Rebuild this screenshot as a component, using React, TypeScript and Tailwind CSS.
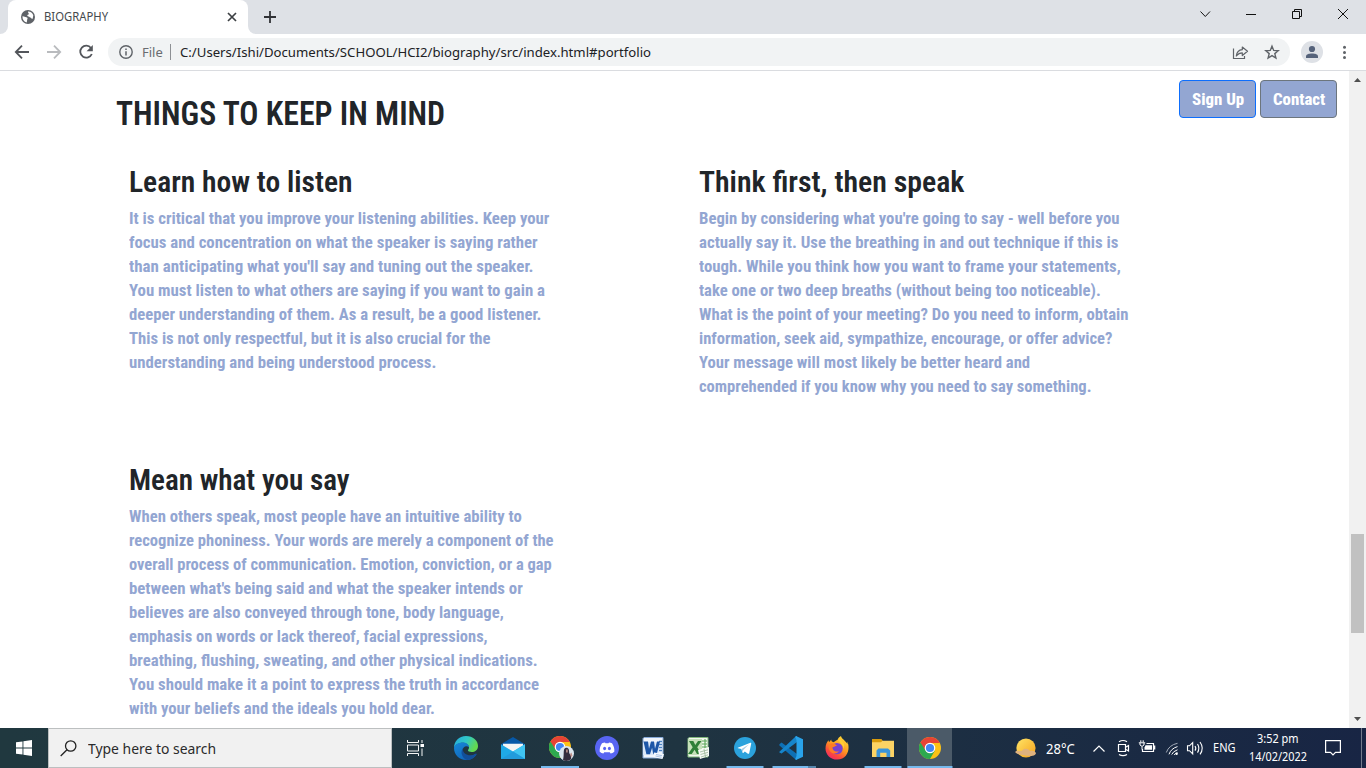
import { useLayoutEffect, useRef, useState, type ReactNode } from "react";

/** A single line of text stretched or condensed to a given width. */
function Fit({ text, width, className = "" }: { text: string; width: number; className?: string }) {
  const ref = useRef<HTMLSpanElement>(null);
  const [scale, setScale] = useState(1);
  useLayoutEffect(() => {
    if (ref.current) setScale(width / ref.current.offsetWidth);
  }, [text, width]);
  return (
    <div className={`whitespace-nowrap ${className}`} style={{ width }}>
      <span ref={ref} className="inline-block origin-left" style={{ transform: `scaleX(${scale})` }}>
        {text}
      </span>
    </div>
  );
}

type Line = [string, number];

const listen: Line[] = [
  ["It is critical that you improve your listening abilities. Keep your", 420],
  ["focus and concentration on what the speaker is saying rather", 409],
  ["than anticipating what you'll say and tuning out the speaker.", 404],
  ["You must listen to what others are saying if you want to gain a", 416],
  ["deeper understanding of them. As a result, be a good listener.", 412],
  ["This is not only respectful, but it is also crucial for the", 362],
  ["understanding and being understood process.", 307],
];

const think: Line[] = [
  ["Begin by considering what you're going to say - well before you", 421],
  ["actually say it. Use the breathing in and out technique if this is", 419],
  ["tough. While you think how you want to frame your statements,", 422],
  ["take one or two deep breaths (without being too noticeable).", 402],
  ["What is the point of your meeting? Do you need to inform, obtain", 430],
  ["information, seek aid, sympathize, encourage, or offer advice?", 413],
  ["Your message will most likely be better heard and", 331],
  ["comprehended if you know why you need to say something.", 392],
];

const mean: Line[] = [
  ["When others speak, most people have an intuitive ability to", 393],
  ["recognize phoniness. Your words are merely a component of the", 425],
  ["overall process of communication. Emotion, conviction, or a gap", 423],
  ["between what's being said and what the speaker intends or", 394],
  ["believes are also conveyed through tone, body language,", 375],
  ["emphasis on words or lack thereof, facial expressions,", 359],
  ["breathing, flushing, sweating, and other physical indications.", 409],
  ["You should make it a point to express the truth in accordance", 410],
  ["with your beliefs and the ideals you hold dear.", 306],
];

function Article({ title, width, lines }: { title: string; width: number; lines: Line[] }) {
  return (
    <article className="w-[570px] shrink-0">
      <h3 className="text-[29px] leading-[34px] font-semibold text-[#212529]">
        <Fit text={title} width={width} />
      </h3>
      <div className="mt-2 text-[16px] leading-6 font-bold text-[#93a6d2]">
        {lines.map(([t, w]) => (
          <Fit key={t} text={t} width={w} />
        ))}
      </div>
    </article>
  );
}

function TabStrip() {
  return (
    <div className="flex h-[34px] bg-[#dee1e6]">
      <div className="flex h-full w-2 items-end bg-white">
        <div className="h-full w-full rounded-br-lg bg-[#dee1e6]" />
      </div>
      <div className="flex h-full w-[240px] items-center rounded-t-lg bg-white pl-[13px]">
        <svg width="14" height="14" viewBox="0 0 14 14">
          <circle cx="7" cy="7" r="7" fill="#5f6368" />
          <path d="M1.5 6.2 C3 6 4 7 5.3 7.2 C6.6 7.4 6.9 8.4 6.2 9.4 L5.8 12.4 C3 11.8 1.2 9.5 1.5 6.2Z M7 1.5 C9.4 1.4 11.6 3 12.3 5.2 L11.7 8.7 C11 8.9 10.4 8.3 9.4 7.5 C8.4 7.1 8 6.5 6.5 6 C5.8 5.2 6.7 4.5 8 4.2 C8.1 3.5 6.9 3 7 1.5Z" fill="#fff" />
        </svg>
        <Fit text="BIOGRAPHY" width={64} className="ml-[9px] text-[12px] leading-4 text-[#45494d]" />
        <svg className="ml-[119px]" width="10" height="10" viewBox="0 0 10 10">
          <path d="M1 1 L9 9 M9 1 L1 9" stroke="#3c4043" strokeWidth="1.7" />
        </svg>
      </div>
      <div className="flex h-full w-2 bg-white">
        <div className="h-full w-full rounded-bl-lg bg-[#dee1e6]" />
      </div>
      <svg className="mt-[11px] ml-2" width="12" height="12" viewBox="0 0 12 12">
        <path d="M6 0 V12 M0 6 H12" stroke="#303236" strokeWidth="1.8" />
      </svg>
      <div className="flex-1" />
      <svg width="166" height="34" viewBox="1200 0 166 34" fill="none" stroke="#111" strokeWidth="1">
        <path d="M1200.5 11.5 L1205.3 16.5 L1210 11.5" />
        <path d="M1246 14.5 H1256" />
        <path d="M1292.5 11.5 H1299.5 V18.5 H1292.5Z M1294.5 11.5 V9.5 H1301.5 V16.5 H1299.5" />
        <path d="M1338 9 L1348 19 M1348 9 L1338 19" />
      </svg>
    </div>
  );
}

function Toolbar() {
  return (
    <div className="flex h-[37px] items-start border-b border-[#dadce0] bg-white">
      <svg width="108" height="36" viewBox="0 34 108 36" fill="none" strokeWidth="1.8">
        <path d="M29 52 H16.5 M22 45.7 L15.8 52 L22 58.3" stroke="#53565b" />
        <path d="M47 52 H59.5 M54 45.7 L60.2 52 L54 58.3" stroke="#b9bbbe" />
        <path d="M91 48 A6 6 0 1 0 91.8 54" stroke="#53565b" />
        <path d="M92.8 45 V51.2 H86.6Z" fill="#53565b" />
      </svg>
      <div className="mt-1 flex h-7 w-[1182px] items-center rounded-full bg-[#f1f3f4] pl-[11px]">
        <svg width="14" height="14" viewBox="0 0 14 14">
          <circle cx="7" cy="7" r="6.2" fill="none" stroke="#5f6368" strokeWidth="1.4" />
          <path d="M7 6.2 V10.4 M7 3.5 V5" stroke="#5f6368" strokeWidth="1.5" />
        </svg>
        <Fit text="File" width={21} className="ml-[9px] text-[13px] leading-5 text-[#696c70]" />
        <div className="ml-[7px] h-4 w-px bg-[#8d9094]" />
        <Fit
          text="C:/Users/Ishi/Documents/SCHOOL/HCI2/biography/src/index.html#portfolio"
          width={471}
          className="ml-[9px] text-[13px] leading-5 text-[#202124]"
        />
        <div className="flex-1" />
        <svg width="58" height="28" viewBox="1232 38 58 28" fill="none" stroke="#5f6368" strokeWidth="1.2">
          <path d="M1233.5 48.5 V58.5 H1244.5 V56" />
          <path d="M1236.3 56 C1236.8 51.8 1239 50 1242.3 49.7 V47 L1247.5 51.3 L1242.3 55.5 V52.8 C1239.5 52.8 1238 53.8 1236.3 56Z" strokeLinejoin="round" />
          <path d="M1272 46.2 L1273.7 50.4 L1278.2 50.7 L1274.8 53.6 L1275.9 58 L1272 55.6 L1268.1 58 L1269.2 53.6 L1265.8 50.7 L1270.3 50.4Z" strokeWidth="1.4" />
        </svg>
      </div>
      <svg width="76" height="36" viewBox="1290 34 76 36">
        <circle cx="1312" cy="52" r="11" fill="#dee1e6" />
        <circle cx="1312" cy="49" r="3.1" fill="#55627a" />
        <path d="M1306 58 V56.5 C1306 54.3 1309 53.5 1312 53.5 C1315 53.5 1318 54.3 1318 56.5 V58Z" fill="#55627a" />
        <g fill="#5f6368">
          <circle cx="1344.5" cy="47.2" r="1.5" />
          <circle cx="1344.5" cy="52.4" r="1.5" />
          <circle cx="1344.5" cy="57.6" r="1.5" />
        </g>
      </svg>
    </div>
  );
}

function ChromeLogo() {
  return (
    <g>
      <circle cx="11" cy="11" r="11" fill="#fbc116" />
      <path d="M11 11 L1.47 5.5 A11 11 0 0 0 11 22 L15.8 13.7Z" fill="#2da94f" />
      <path d="M1.47 5.5 A11 11 0 0 1 20.53 5.5 L20.6 6 H11 L6.6 13.6Z" fill="#e64335" />
      <circle cx="11" cy="11" r="5.3" fill="#fff" />
      <circle cx="11" cy="11" r="4.1" fill="#4285f4" />
    </g>
  );
}

function TaskCell({ className, line, children }: { className: string; line?: string; children: ReactNode }) {
  return (
    <div className={`relative flex h-10 shrink-0 items-center justify-center ${className}`}>
      {children}
      {line && <div className={`absolute bottom-0 left-1/2 h-0.5 -translate-x-1/2 bg-[#76b9ed] ${line}`} />}
    </div>
  );
}

function Taskbar() {
  return (
    <footer className="flex h-10 bg-linear-to-r from-[#20383f] via-[#1f3441] to-[#182544] text-white">
      <div className="flex w-12 items-center justify-center">
        <svg width="16" height="16" viewBox="0 0 16 16" fill="#fff">
          <path d="M0 2.3 L6.5 1.4 V7.5 H0Z M7.4 1.2 L16 0 V7.5 H7.4Z M0 8.4 H6.5 V14.6 L0 13.7Z M7.4 8.4 H16 V16 L7.4 14.8Z" />
        </svg>
      </div>
      <div className="flex w-[344px] items-center border border-[#bcbfc0] bg-[#f1f1f1] pl-[11px]">
        <svg width="17" height="17" viewBox="0 0 17 17" fill="none" stroke="#222" strokeWidth="1.3">
          <circle cx="10.7" cy="6" r="5.2" />
          <path d="M7 9.7 L0.7 16" />
        </svg>
        <Fit text="Type here to search" width={128} className="ml-[11px] text-[15px] leading-5 text-[#2b2b2b]" />
      </div>
      <div className="flex w-[51px] items-center pl-[15px]">
        <svg width="18" height="16" viewBox="0 0 18 16" fill="none" stroke="#f4f6f6" strokeWidth="1">
          <path d="M0.5 0 V2.5 H11.5 V0 M0.5 5 H11.5 V11 H0.5Z M0.5 16 V13.5 H11.5 V16 M15 0 V3 M15 8.5 V16" />
          <path d="M13.5 4 H17 V7 H13.5Z" fill="#fff" stroke="none" />
        </svg>
      </div>
      <TaskCell className="w-[46px]">
        <svg width="24" height="24" viewBox="0 0 24 24">
          <defs>
            <linearGradient id="edgeTop" x1="0" x2="1" y1="0" y2=".4">
              <stop offset="0" stopColor="#24a9e0" />
              <stop offset=".55" stopColor="#31c8c4" />
              <stop offset="1" stopColor="#63d94f" />
            </linearGradient>
            <linearGradient id="edgeLow" x1="0" x2=".8" y1="0" y2="1">
              <stop offset="0" stopColor="#1689d8" />
              <stop offset="1" stopColor="#1160b4" />
            </linearGradient>
          </defs>
          <path d="M0 12 C0 5 5 0 12 0 C19 0 24 4.5 24 10 C24 14 20.8 16 17.8 16 C15.5 16 13.8 15.3 14 14.3 C14.2 13.6 15 13 15 11.6 C15 9 12 6.8 8.8 6.8 C4.6 6.8 1 9.3 0 12Z" fill="url(#edgeTop)" />
          <path d="M0 12 C.4 8.7 4.2 6.6 8.8 6.6 C12 6.6 15 8.7 15 11.2 C12.5 8.8 8.5 10.8 8.5 14.4 C8.5 18.4 13 21.2 17.5 19.8 C19.4 19.2 20.7 18.3 21.7 17.8 C22.4 17.5 22.7 17.8 22.4 18.4 C20.4 21.8 16.7 24 12 24 C5.2 24 0 18.7 0 12Z" fill="url(#edgeLow)" />
          <path d="M8.7 12.5 C5.6 17 9 23.2 13.5 23.9 C17.5 23.6 20.7 21.4 22.4 18.4 C22.7 17.8 22.4 17.5 21.7 17.8 C16 21.2 8.5 18.6 8.7 12.5Z" fill="#124f99" />
        </svg>
      </TaskCell>
      <TaskCell className="w-12">
        <svg width="24" height="22" viewBox="0 0 24 22">
          <path d="M0 7.2 L12 0 L24 7.2 L12 14Z" fill="#0759a8" />
          <path d="M2 6.8 H22 V12 L12 16 L2 12Z" fill="#f4f5f5" />
          <path d="M0 7.2 L12 14.5 L24 7.2 V22 H0Z" fill="#1fa9e6" />
          <path d="M12 14.5 L24 7.2 V22Z" fill="#40c5f2" />
          <path d="M0 22 L12 14.5 L24 22Z" fill="#229bdc" />
        </svg>
      </TaskCell>
      <TaskCell className="w-[46px]" line="w-[38px]">
        <svg className="ml-[3px]" width="25" height="25" viewBox="0 0 25 25">
          <ChromeLogo />
          <circle cx="17.5" cy="17.5" r="7.5" fill="#dce6ee" />
          <path d="M14 23.9 C15.2 20 14.2 14.5 15.4 12.8 C16.5 11.2 19.2 11.5 19.8 13.5 C20.5 16 19.6 17.5 21.8 19 L22.3 23 C19.5 25.4 16 25.3 14 23.9Z" fill="#352d3d" />
          <path d="M17 13.6 H18.8 V16 L18 17 L17 16Z" fill="#ad8580" />
          <path d="M21 18 L22.5 16.5 L23.5 20 L22 21Z" fill="#bf9089" />
        </svg>
      </TaskCell>
      <TaskCell className="w-[47px]">
        <svg width="24" height="24" viewBox="0 0 24 24">
          <circle cx="12" cy="12" r="12" fill="#5865f2" />
          <path d="M7 7.3 C8 6.8 9 6.5 10 6.4 L10.5 7.3 H13.5 L14 6.4 C15 6.5 16 6.8 17 7.3 C18.7 9.8 19.7 12.5 19.3 15.8 C18.1 16.8 16.9 17.3 15.6 17.6 L14.8 16.2 H9.2 L8.4 17.6 C7.1 17.3 5.9 16.8 4.7 15.8 C4.4 12.5 5.3 9.8 7 7.3Z" fill="#fff" />
          <ellipse cx="9.6" cy="12.5" rx="1.5" ry="1.7" fill="#5865f2" />
          <ellipse cx="14.4" cy="12.5" rx="1.5" ry="1.7" fill="#5865f2" />
        </svg>
      </TaskCell>
      <TaskCell className="w-[45px]">
        <svg width="22" height="22" viewBox="0 0 22 22">
          <path d="M2 0.5 H21 V20 L20 21 H1 V1.5Z" fill="#f0f5fc" stroke="#86a9d8" />
          <path d="M17 4.5 H20 M17 7.5 H20 M17 10.5 H20 M16 13.5 H20" stroke="#4b83c3" strokeWidth="1.4" />
          <path d="M1 5 H17 V18 H1Z" fill="#dbe8f8" />
          <path d="M1.5 4.5 H6 L7 11.8 L9 4.5 H12 L13 11.8 L15 4.5 H18 L14.7 17.3 H11.2 L10.1 10.8 L8 17.3 H4.4Z" fill="#1c56a7" />
          <path d="M12 15.5 L22 17 L20.5 22 L11 20Z" fill="#f5f9fe" />
          <path d="M14 17.5 L20 18.7 M13.5 19 L19.5 20.3" stroke="#8fb0da" strokeWidth=".7" />
        </svg>
      </TaskCell>
      <TaskCell className="w-[46px]">
        <svg width="22" height="22" viewBox="0 0 22 22">
          <path d="M2 0.5 H21 V20 H1 V1.5Z" fill="#f2f8ef" stroke="#80b77b" />
          <path d="M15 4 H20 M15 7 H20 M15 10 H20 M18 2 V12" stroke="#5ba657" strokeWidth="1.1" />
          <path d="M1 2 H15 V18 H1Z" fill="#c5dfb9" />
          <path d="M2 4 H6.3 L8.3 8 L11 4 H14.5 L10.2 10.2 L14.5 17 H10 L7.6 12.7 L4.7 17 H1 L5.7 10.3Z" fill="#2f8037" />
          <path d="M11 13 L22 10 V19 L13 22Z" fill="#f6faf4" />
          <path d="M13 15 L21 12.8 M13.5 17.5 L21 15.3 M14 20 L21 17.8 M17 12 L18.5 20" stroke="#9ab798" strokeWidth=".8" />
        </svg>
      </TaskCell>
      <TaskCell className="w-12" line="w-[37px]">
        <svg width="22" height="22" viewBox="0 0 22 22">
          <circle cx="11" cy="11" r="11" fill="#2ba2dc" />
          <path d="M3.8 10.7 L16.4 5.8 C17.1 5.6 17.4 6 17.2 6.7 L15.2 16.2 C15 16.9 14.5 17 13.9 16.7 L10.8 14.4 L9.3 15.9 C8.9 16.2 8.6 16.1 8.5 15.6 L7.3 12.1 L4 11.2 C3.6 11.1 3.5 10.9 3.8 10.7Z" fill="#fff" />
          <path d="M7.5 12 L14.8 7.6 L9.2 12.9 L8.8 15.5Z" fill="#a9cce2" />
        </svg>
      </TaskCell>
      <TaskCell className="w-11" line="w-[37px]">
        <svg width="24" height="24" viewBox="0 0 24 24">
          <path d="M0.4 8.3 L2.6 6.5 L18 18 V24 L16.6 23.6 L0.4 9.4Z" fill="#0e70b5" />
          <path d="M0.4 15.7 L16.6 0.4 L18 0 V6 L2.6 17.5 L0.4 16.4Z" fill="#1685cb" />
          <path d="M17 0 L24 3.2 V20.8 L17 24 L16.2 23 L17.5 20 V4 L16.2 1Z" fill="#29a3ea" />
        </svg>
        <div className="absolute -right-[3px] bottom-0 z-10 h-0.5 w-2 bg-[#5686ac]" />
      </TaskCell>
      <TaskCell className="w-12">
        <svg width="24" height="24" viewBox="0 0 24 24">
          <defs>
            <linearGradient id="fox" x1=".8" x2=".2" y1="0" y2="1">
              <stop offset="0" stopColor="#ffe03a" />
              <stop offset=".45" stopColor="#ff9a20" />
              <stop offset=".75" stopColor="#fb4b3c" />
              <stop offset="1" stopColor="#ef2370" />
            </linearGradient>
          </defs>
          <path d="M12.8 3.5 C13 2 14.5 .8 16 0 C16.3 2.6 21 5 22.5 8.2 L22.2 5.6 C25.5 12 23 23.5 12.2 23.6 C5.5 23.6 .5 18.5 .5 12.4 C.5 8.8 2 6 3.5 4.3 L4 6.2 L6.3 3.6 C6.1 5.2 7 5.8 8.5 6.2Z" fill="url(#fox)" />
          <circle cx="12" cy="12.6" r="5.7" fill="#7842cf" />
          <path d="M3.5 9 C7 6 10.5 7.8 12 9.8 C10 10.2 9.5 11 7.5 11.3 C7.2 14 10 16.5 14 15.3 C10 20 3 17 3.5 9Z" fill="#ff7c25" />
          <path d="M13 3.5 C14 7 18.8 8 18.2 13 C21 9 18 5.5 15.5 3.5Z" fill="#ffce37" />
        </svg>
      </TaskCell>
      <TaskCell className="w-11" line="w-[37px]">
        <svg width="22" height="18" viewBox="0 0 22 18">
          <path d="M0 0 H9 L10.5 1.7 H22 V18 H0Z" fill="#fcd364" />
          <path d="M0 0 H9 L10.5 1.7 L9 3.2 H0Z" fill="#d99b0c" />
          <path d="M4.5 18 V11.5 L6.5 9.5 H16 L18.2 11.5 V18 H14.5 V13.8 H8.2 V18Z" fill="#3995dc" />
        </svg>
      </TaskCell>
      <TaskCell className="ml-0.5 w-[45px] bg-[#4b5a68]" line="w-[45px]">
        <svg width="22" height="22" viewBox="0 0 22 22">
          <ChromeLogo />
        </svg>
      </TaskCell>
      <div className="flex-1" />
      <svg className="mt-[9px]" width="22" height="22" viewBox="0 0 22 22">
        <defs>
          <linearGradient id="sun" x1="0" x2="1" y1="0" y2="1">
            <stop offset="0" stopColor="#ffe567" />
            <stop offset="1" stopColor="#f5a11c" />
          </linearGradient>
        </defs>
        <circle cx="11" cy="11" r="9.6" fill="url(#sun)" />
        <path d="M0 15 C2 12.5 5 14.6 7 13.8 C9 10.4 14 11.5 15 14 C18 13.2 20.5 14 21 16.5 C19 20 15 18.6 12 18.7 C8 17.5 3 18.5 0 15Z" fill="#dfb27e" />
      </svg>
      <Fit text="28°C" width={29} className="mt-[11px] ml-[9px] text-[14px] leading-5" />
      <svg className="ml-[17px]" width="114" height="40" viewBox="1092 728 114 40" fill="none" stroke="#fff" strokeWidth="1.2">
        <path d="M1093.5 751.5 L1099 746 L1104.5 751.5" />
        <path d="M1118.5 744.5 H1125.5 V751.5 H1118.5Z M1126 747 L1128.5 745.5 V751 L1126 749.5 M1119 741.7 Q1123 739.3 1127 741.7 M1119 754.5 Q1123 756.9 1127 754.5" />
        <path d="M1146.5 743.5 H1153.5 V751.5 H1142.5 V749 M1154.7 745.5 V749.5" />
        <path d="M1145.5 745.3 H1152 V749.7 H1144.5 V747.5Z" fill="#fff" stroke="none" />
        <path d="M1138.8 742.8 H1145.2 M1140 743 V745 Q1142 747.8 1144 745 V743 M1140.8 742.5 V740.3 M1143.2 742.5 V740.3 M1142 746.5 V749.5" strokeWidth="1" />
        <g strokeWidth="1">
          <path d="M1166.3 752.5 Q1169 745 1177.5 743.3" stroke="#a5adba" />
          <path d="M1169 754.3 Q1171 748.5 1177.5 746.6" />
          <path d="M1171.7 754.5 Q1173 751.3 1177.5 749.8" />
          <path d="M1174.2 754.8 Q1175 753.5 1177.5 752.8" />
        </g>
        <circle cx="1176.6" cy="753.8" r="1.2" fill="#fff" stroke="none" />
        <path d="M1187.5 745.8 H1189.5 L1192.7 742.5 V754 L1189.5 750.7 H1187.5Z M1195 746 Q1196.6 748.2 1195 750.6 M1197.5 744 Q1200.2 748.2 1197.5 752.6 M1200 742 Q1204.5 748.2 1200 754.4" strokeWidth="1.1" />
      </svg>
      <Fit text="ENG" width={23} className="mt-[10px] ml-[7px] text-[12px] leading-5" />
      <div className="ml-[13px] flex w-[58px] flex-col items-center pt-[2px] text-[12px] leading-[18px]">
        <Fit text="3:52 pm" width={42} />
        <Fit text="14/02/2022" width={58} />
      </div>
      <svg className="mt-3 ml-[18px]" width="16" height="17" viewBox="0 0 16 17" fill="none" stroke="#fff" strokeWidth="1.2">
        <path d="M.6 .6 H15.4 V12.4 H10.5 L8 15 L5.5 12.4 H.6Z" />
      </svg>
      <div className="mr-1 ml-5 w-px bg-[#727b8c]" />
    </footer>
  );
}

export default function App() {
  return (
    <div className="flex h-[768px] w-[1366px] flex-col overflow-hidden bg-white font-['Noto_Sans',sans-serif]">
      <TabStrip />
      <Toolbar />
      <div className="flex h-[657px] bg-white">
        <main className="flex flex-1 items-start font-['Liberation_Sans_Narrow','Roboto_Condensed',Roboto,sans-serif]">
          <section className="w-[1179px] pt-[23px] pl-[116px]">
            <h2 className="text-[33.5px] leading-10 font-semibold text-[#212529]">
              <Fit text="THINGS TO KEEP IN MIND" width={329} />
            </h2>
            <div className="mt-[31px] flex h-[298px] pl-[12.5px]">
              <Article title="Learn how to listen" width={223} lines={listen} />
              <Article title="Think first, then speak" width={265} lines={think} />
            </div>
            <div className="pl-[12.5px]">
              <Article title="Mean what you say" width={221} lines={mean} />
            </div>
          </section>
          <div className="flex gap-1 pt-[9px] text-[16.5px] leading-6 font-extrabold text-white">
            <button className="flex h-[38px] w-[77px] items-center rounded border border-[#0d6efd] bg-[#93a6d2] pt-0.5 pl-[11.5px] text-left">
              <Fit text="Sign Up" width={52} />
            </button>
            <button className="flex h-[38px] w-[77px] items-center rounded border border-[#6c757d] bg-[#93a6d2] pt-0.5 pl-[11.5px] text-left">
              <Fit text="Contact" width={52} />
            </button>
          </div>
        </main>
        <div className="flex w-[17px] flex-col items-center bg-[#f1f1f1]">
          <svg className="mt-[7px]" width="7" height="4" viewBox="0 0 7 4">
            <path d="M3.5 0 L7 4 H0Z" fill="#505050" />
          </svg>
          <div className="mt-[452px] h-[99px] w-[13px] bg-[#c1c1c1]" />
          <svg className="mt-auto mb-[7px]" width="7" height="4" viewBox="0 0 7 4">
            <path d="M0 0 H7 L3.5 4Z" fill="#505050" />
          </svg>
        </div>
      </div>
      <Taskbar />
    </div>
  );
}
